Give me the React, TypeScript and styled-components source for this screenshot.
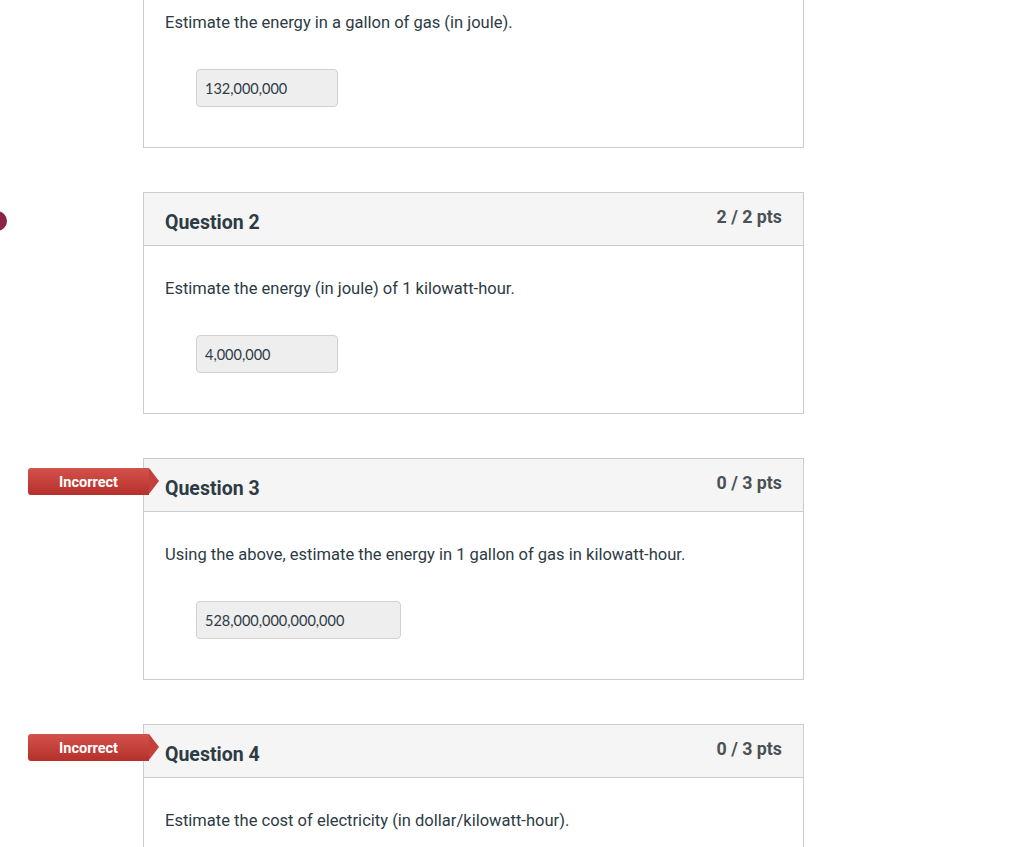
import React from 'react';
import styled, { createGlobalStyle } from 'styled-components';

const GlobalStyle = createGlobalStyle`
  html, body {
    margin: 0;
    padding: 0;
    background: #ffffff;
    overflow: hidden;
  }
  body {
    font-family: Roboto, "Liberation Sans", Arial, sans-serif;
    color: #2d3b45;
  }
`;

const Page = styled.main`
  height: 847px;
  overflow: hidden;
`;

const QuestionList = styled.div`
  width: 661px;
  margin: -74px 0 0 143px;
  display: flex;
  flex-direction: column;
  gap: 44px;
`;

const Card = styled.section`
  position: relative;
  border: 1px solid #c7cdd1;
  background: #ffffff;
`;

const Header = styled.header`
  height: 52px;
  display: flex;
  justify-content: space-between;
  align-items: flex-start;
  padding: 0 21px;
  background: #f5f5f5;
  border-bottom: 1px solid #c7cdd1;
`;

const Title = styled.h2`
  margin: 19px 0 0;
  font-size: 19.5px;
  line-height: 22px;
  font-weight: 700;
  color: #2d3b45;
`;

const Points = styled.div`
  margin-top: 14px;
  font-size: 17.8px;
  line-height: 20px;
  font-weight: 700;
  color: #4c5155;
`;

const Body = styled.div`
  padding: 31px 21px 40px;
`;

const Prompt = styled.p`
  margin: 0 0 34px;
  font-size: 16.55px;
  line-height: 24px;
  color: #2d3b45;
`;

const Answer = styled.div<{ $width: number }>`
  box-sizing: border-box;
  width: ${(p) => p.$width}px;
  height: 38px;
  margin-left: 31px;
  padding: 0 8px;
  display: flex;
  align-items: center;
  background: #eeeeee;
  border: 1px solid #cfd2d4;
  border-radius: 4px;
  font-family: Lato, "Liberation Sans", Arial, sans-serif;
  font-size: 14.5px;
  color: #2d3b45;
`;

const Badge = styled.span`
  position: absolute;
  left: -116px;
  top: 9px;
  width: 121px;
  height: 27px;
  display: flex;
  align-items: center;
  justify-content: center;
  padding-top: 1px;
  box-sizing: border-box;
  background: linear-gradient(#d4524c, #b5302b);
  border-radius: 3px 0 0 3px;
  color: #ffffff;
  font-size: 14.5px;
  font-weight: 700;

  &::after {
    content: '';
    position: absolute;
    right: -10px;
    top: 0;
    border-style: solid;
    border-width: 13.5px 0 13.5px 10px;
    border-color: transparent transparent transparent #c4403b;
  }
`;

const Marker = styled.span`
  position: absolute;
  left: -157px;
  top: 18px;
  width: 20px;
  height: 20px;
  border-radius: 50%;
  background: #8c2442;
`;

type Question = {
  n: number;
  prompt: string;
  answer: string;
  width: number;
  pts: string;
  incorrect?: boolean;
  marked?: boolean;
};

const questions: Question[] = [
  { n: 1, prompt: 'Estimate the energy in a gallon of gas (in joule).', answer: '132,000,000', width: 142, pts: '2 / 2 pts' },
  { n: 2, prompt: 'Estimate the energy (in joule) of 1 kilowatt-hour.', answer: '4,000,000', width: 142, pts: '2 / 2 pts', marked: true },
  { n: 3, prompt: 'Using the above, estimate the energy in 1 gallon of gas in kilowatt-hour.', answer: '528,000,000,000,000', width: 205, pts: '0 / 3 pts', incorrect: true },
  { n: 4, prompt: 'Estimate the cost of electricity (in dollar/kilowatt-hour).', answer: '0.10', width: 142, pts: '0 / 3 pts', incorrect: true },
];

const App: React.FC = () => {
  return (
    <Page>
      <GlobalStyle />
      <QuestionList>
        {questions.map((q) => (
          <Card key={q.n}>
            {q.incorrect && <Badge>Incorrect</Badge>}
            {q.marked && <Marker />}
            <Header>
              <Title>Question {q.n}</Title>
              <Points>{q.pts}</Points>
            </Header>
            <Body>
              <Prompt>{q.prompt}</Prompt>
              <Answer $width={q.width}>{q.answer}</Answer>
            </Body>
          </Card>
        ))}
      </QuestionList>
    </Page>
  );
};

export default App;
